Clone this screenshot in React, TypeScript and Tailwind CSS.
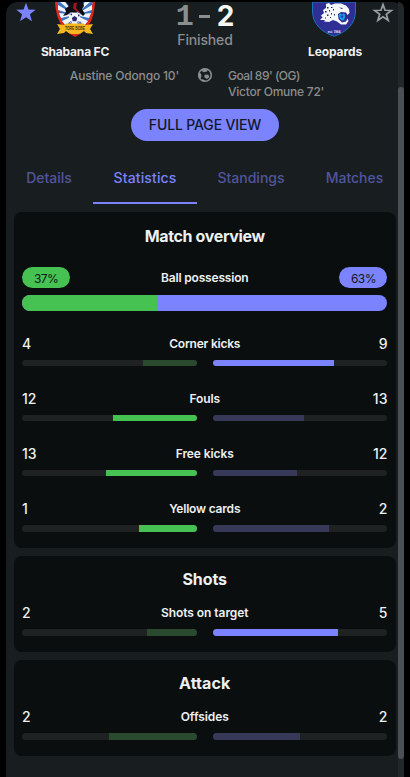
import clsx from "clsx";

type Stat = {
  name: string;
  home: number;
  away: number;
  lead: "home" | "away" | "none";
  labelClass: string;
  barClass: string;
};

type StatGroup = {
  title: string;
  titleClass: string;
  rows: Stat[];
};

const overview: StatGroup = {
  title: "Match overview",
  titleClass: "tracking-[-0.35px]",
  rows: [
    {
      name: "Corner kicks",
      home: 4,
      away: 9,
      lead: "away",
      labelClass: "tracking-[-0.22px]",
      barClass: "h-[6px]",
    },
    {
      name: "Fouls",
      home: 12,
      away: 13,
      lead: "home",
      labelClass: "tracking-[-0.1px]",
      barClass: "h-[6px]",
    },
    {
      name: "Free kicks",
      home: 13,
      away: 12,
      lead: "home",
      labelClass: "tracking-[-0.1px]",
      barClass: "h-[6px]",
    },
    {
      name: "Yellow cards",
      home: 1,
      away: 2,
      lead: "home",
      labelClass: "tracking-[-0.2px]",
      barClass: "h-[7px]",
    },
  ],
};

const groups: StatGroup[] = [
  {
    title: "Shots",
    titleClass: "tracking-[-0.1px]",
    rows: [
      {
        name: "Shots on target",
        home: 2,
        away: 5,
        lead: "away",
        labelClass: "tracking-[-0.05px]",
        barClass: "h-[7px]",
      },
    ],
  },
  {
    title: "Attack",
    titleClass: "tracking-[0.1px]",
    rows: [
      {
        name: "Offsides",
        home: 2,
        away: 2,
        lead: "none",
        labelClass: "tracking-[-0.1px]",
        barClass: "h-[7px]",
      },
    ],
  },
];

export default function App() {
  return (
    <div className="h-[777px] w-[410px] bg-black px-[6px] pt-[2px] font-['Inter','Liberation_Sans',sans-serif] text-[#edf0f1]">
      <div className="flex h-[775px] rounded-t-xl bg-[#181d1f]">
        <main className="w-[392px] shrink-0">
          <MatchHeader />
          <Tabs />
          <div className="flex flex-col gap-2 pt-2 pr-[2px] pl-2">
            <section className="h-[336px] rounded-lg bg-[#0a0e0f] pt-3 pr-[8.55px] pl-2">
              <GroupTitle group={overview} />
              <Possession home={37} away={63} />
              <div className="mt-[23px] flex flex-col gap-[23px]">
                {overview.rows.map((row) => (
                  <StatRow key={row.name} {...row} />
                ))}
              </div>
            </section>
            {groups.map((group) => (
              <section
                key={group.title}
                className="h-24 rounded-lg bg-[#0a0e0f] pt-[11px] pr-[8.55px] pl-2"
              >
                <GroupTitle group={group} />
                <div className="mt-3">
                  {group.rows.map((row) => (
                    <StatRow key={row.name} {...row} />
                  ))}
                </div>
              </section>
            ))}
          </div>
        </main>
        <div className="w-[6px] rounded-tr-xl bg-[#22272a] pt-[85px]">
          <div className="h-[672px] rounded-full bg-[#4b4f56]" />
        </div>
      </div>
    </div>
  );
}

function MatchHeader() {
  return (
    <header className="h-[158px]">
      <div className="flex h-[58px] w-[398px]">
        <div className="w-10 pl-[9px]">
          <Star className="size-[22px]" filled />
        </div>
        <div className="flex w-[58px] flex-col items-center">
          <ShabanaCrest />
          <span className="mt-[7px] text-xs leading-4 font-bold tracking-[-0.2px] whitespace-nowrap">
            Shabana FC
          </span>
        </div>
        <div className="flex w-[202px] flex-col items-center">
          <div className="flex h-7 items-center text-[28px] leading-7 font-bold text-[#8b8e8f]">
            <span className="pt-px font-['Liberation_Mono',monospace] text-[30px]">1</span>
            <span className="mt-px mr-[7px] ml-[5px] h-[3px] w-[11px] bg-[#8b8e8f]" />
            <span className="pb-px text-[#f4f5f5]">2</span>
          </div>
          <span className="text-sm leading-5 font-medium tracking-[-0.15px] text-[#8b8e8f]">
            Finished
          </span>
        </div>
        <div className="flex w-[58px] flex-col items-center">
          <LeopardsCrest />
          <span className="mt-[7px] text-xs leading-4 font-bold tracking-[-0.1px]">Leopards</span>
        </div>
        <div className="w-[34px] pl-2">
          <Star className="size-[22px]" />
        </div>
      </div>
      <div className="mt-2 flex h-8 text-xs leading-4 font-medium text-[#8b8e8f]">
        <div className="w-[173px] text-right tracking-[-0.17px]">Austine Odongo 10'</div>
        <div className="w-[49px] pl-[18px]">
          <BallIcon />
        </div>
        <div className="whitespace-nowrap">
          <div className="tracking-[-0.5px]">Goal 89' (OG)</div>
          <div className="tracking-[-0.25px]">Victor Omune 72'</div>
        </div>
      </div>
      <button className="mt-[9px] ml-[125px] block h-8 w-[148px] rounded-full bg-[#7b83ff] text-center text-sm font-medium tracking-[-0.15px] whitespace-nowrap text-[#12172a]">
        FULL PAGE VIEW
      </button>
    </header>
  );
}

const tabs = [
  { label: "Details", className: "w-[87px] pr-px" },
  { label: "Statistics", className: "w-[104px] tracking-[0.15px]" },
  { label: "Standings", className: "w-[108px]" },
  { label: "Matches", className: "w-[99px]" },
];

function Tabs() {
  return (
    <nav className="flex h-11 w-[398px]">
      {tabs.map((tab) => (
        <button
          key={tab.label}
          className={clsx(
            "h-11 border-b-2 pb-[6px] text-center text-sm font-medium",
            tab.className,
            tab.label === "Statistics"
              ? "border-[#7b83ff] text-[#7b83ff]"
              : "border-transparent text-[#50559d]",
          )}
        >
          {tab.label}
        </button>
      ))}
    </nav>
  );
}

function GroupTitle({ group }: { group: StatGroup }) {
  return (
    <h2 className={clsx("text-center text-base leading-6 font-bold", group.titleClass)}>
      {group.title}
    </h2>
  );
}

function Possession({ home, away }: { home: number; away: number }) {
  return (
    <div className="mt-[19px]">
      <div className="flex h-[21px] items-center justify-between text-xs text-[#0f1719]">
        <span className="flex h-[21px] w-12 items-center justify-center rounded-full bg-[#46c252] pt-[2px] tracking-[-0.6px]">
          {home}%
        </span>
        <span className="font-semibold tracking-[-0.18px] text-[#edf0f1]">Ball possession</span>
        <span className="flex h-[21px] w-12 items-center justify-center rounded-full bg-[#7b83ff] pt-[2px] tracking-[-0.6px]">
          {away}%
        </span>
      </div>
      <div className="mt-[7px] flex h-4 overflow-hidden rounded-full bg-[#7b83ff]">
        <div className="bg-[#46c252]" style={{ width: `${home}%` }} />
      </div>
    </div>
  );
}

function StatRow({ name, home, away, lead, labelClass, barClass }: Stat) {
  const total = home + away;

  return (
    <div>
      <div className="flex h-5 items-center text-sm">
        <span className="w-[60px] font-medium">{home}</span>
        <span className={clsx("grow text-center text-xs font-semibold", labelClass)}>{name}</span>
        <span className="w-[60px] text-right font-medium">{away}</span>
      </div>
      <div className="mt-[6px] flex gap-4">
        <div
          className={clsx(
            "flex flex-1 justify-end overflow-hidden rounded-full bg-[#202123]",
            barClass,
          )}
        >
          <div
            className={lead === "home" ? "bg-[#46c252]" : "bg-[#2a4a2f]"}
            style={{ width: `${(home / total) * 100}%` }}
          />
        </div>
        <div className={clsx("flex flex-1 overflow-hidden rounded-full bg-[#202123]", barClass)}>
          <div
            className={lead === "away" ? "bg-[#7b83ff]" : "bg-[#373959]"}
            style={{ width: `${(away / total) * 100}%` }}
          />
        </div>
      </div>
    </div>
  );
}

function Star({ filled, className }: { filled?: boolean; className?: string }) {
  return (
    <svg viewBox="0 0 24 24" className={className}>
      {filled ? (
        <path
          fill="#7b83ff"
          d="M12 .8l2.7 7.4 7.9.2-6.3 4.9 2.2 7.7-6.5-4.4L5.5 21l2.2-7.7-6.3-4.9 7.9-.2z"
        />
      ) : (
        <path
          fill="none"
          stroke="#999da4"
          strokeWidth="1.9"
          d="M12 2.8l2.2 6.2 6.9.2-5.5 4.2 2 6.6L12 16.2 6.4 20l2-6.6-5.5-4.2L9.8 9z"
        />
      )}
    </svg>
  );
}

function BallIcon() {
  return (
    <svg viewBox="0 0 16 16" className="-mt-px size-4">
      <circle cx="8" cy="8" r="6.3" fill="none" stroke="#8b8e8f" strokeWidth="1.6" />
      <path
        fill="#8b8e8f"
        d="M8.5 7.5l3 .3.8 2.5-2.3 1.8-2.5-1.5-.2-2zM6 1.5l5 .5-1 2.5-3 .8L4.5 4zM1.5 6l2.5.5.5 3L3 12 1.5 9.5zM13 4l1.5 3-1.5-.5zM5.5 12l2.5 1.5-.5 1.5-3-1z"
      />
    </svg>
  );
}

function ShabanaCrest() {
  return (
    <svg viewBox="0 0 42 35" className="h-[35px] w-[42px]">
      <path d="M1 0h40c-1 13-3 26-20 34C5 27 2 13 1 0z" fill="#e4251b" />
      <path d="M3.5 0h35c-1 12-3 23-17.5 30C7 24 4.5 12 3.5 0z" fill="#3c75bd" />
      <path
        d="M21 13L4 3v5zM21 13L5 11l2 5zM21 13L8 19l4 5zM21 13L38 3v5zM21 13l16-2-2 5zM21 13l13 6-4 5zM21 13L6 0h5zM21 13L36 0h-5z"
        fill="#eef4fa"
      />
      <path
        d="M12 0h17l1 4-2 3 3 5-2 2-5-5-3 2-4-1-4 3-4 1 3-4-1-3 4-3z"
        fill="#100c12"
      />
      <path d="M20 1l3 0-1 5 4 5-3-1-4-4z" fill="#a5151d" />
      <circle cx="20.5" cy="16.5" r="6" fill="#f4f4fb" />
      <path
        d="M20.5 14l2.8 2-1 3.2h-3.5l-1-3.2zM16 12.5l2-1v2zM24 12l2 2-2 .5zM16 19l2 1-1 1zM24 19l1 1-2 1z"
        fill="#282970"
      />
      <path
        d="M3 22l7 1 2-1.5h17l3 1.5 7-1-3 5 3 5-7-1-2-2-4 3H16l-4-3-2 2-7 1 3-5z"
        fill="#f4b81e"
      />
      <path d="M15 31.5l6 1 6-1-6 3.5z" fill="#df271a" />
      <text
        x="21"
        y="27.5"
        textAnchor="middle"
        fontSize="4.6"
        fontWeight="700"
        fontFamily="Liberation Sans, sans-serif"
        textLength="20"
        lengthAdjust="spacingAndGlyphs"
        fill="#49310a"
      >
        TORE BOBE
      </text>
    </svg>
  );
}

function LeopardsCrest() {
  return (
    <svg viewBox="0 0 44 35" className="-ml-[2px] h-[35px] w-[44px]">
      <path
        d="M.5 0h43v9c0 13-9 21-21.5 25.3C9.5 30 .5 22 .5 9z"
        fill="#2f2e94"
        stroke="#1674b8"
      />
      <path
        d="M14 2L17 1L19 3L23 1.5H29L34 3.5L37 7L37.5 11L35.5 13L34 10.5L29 10L26 12L26.5 17L30 20.5L34 19.5L35.5 16.5L36.5 19L34 22.5L29 22.5L25 19.5L21 18L17 20L12 19.5L13 18L8 18L10.5 15.5L9 13.5L12 11L11 8L14 6Z"
        fill="#f4f7fb"
      />
      <path
        d="M15 5h1.5v1.5H15zM19 5h1.5v1H19zM13 9h1.5v1.5H13zM17 8h1v1.5h-1zM21 7h1v1.5h-1zM15 12.5h1.5V14H15zM19 11h1v1.5h-1zM13 15.5h1v1h-1zM18 15h1v1h-1zM27 5.5l4 .5-1 1zM22 12h1v1.5h-1z"
        fill="#29275f"
      />
      <path
        d="M27 12l1.5-.5 1.5 1 1.5-1 1.5 1v3l-1 2.5-2 .5-2-1.5-1-2.5z"
        fill="#159be8"
      />
      <circle cx="30" cy="14.5" r="1.2" fill="#263eaa" />
      <text
        x="22"
        y="30.5"
        textAnchor="middle"
        fontSize="3"
        fontWeight="700"
        fontFamily="Liberation Sans, sans-serif"
        fill="#e3e6f7"
      >
        est. 1964
      </text>
    </svg>
  );
}
